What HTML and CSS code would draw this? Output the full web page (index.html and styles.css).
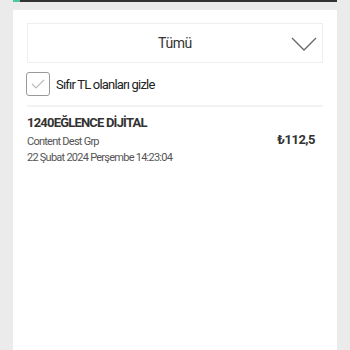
FILE: index.html
```html
<!DOCTYPE html>
<html>
<head>
<meta charset="utf-8">
<link rel="stylesheet" href="styles.css">
</head>
<body>
<div class="topbar"><span class="accent"></span></div>
<div class="card">
  <div class="select">
    <span class="select-text">Tümü</span>
    <svg class="chev" width="26" height="15" viewBox="0 0 26 15"><path d="M1 1 L13 13 L25 1" fill="none" stroke="#666" stroke-width="1.3"/></svg>
  </div>
  <label class="check">
    <span class="box"><svg width="14" height="10" viewBox="0 0 14 10"><path d="M1 5 L5 9 L13 1" fill="none" stroke="#bbb" stroke-width="1.2"/></svg></span>
    <span class="check-label">Sıfır TL olanları gizle</span>
  </label>
  <div class="sep"></div>
  <div class="item">
    <div class="item-left">
      <div class="title">1240EĞLENCE DİJİTAL</div>
      <div class="sub">Content Dest Grp</div>
      <div class="sub">22 Şubat 2024 Perşembe 14:23:04</div>
    </div>
    <div class="amount">₺112,5</div>
  </div>
</div>
</body>
</html>
```
FILE: styles.css
```css
html, body { margin: 0; padding: 0; }
body {
  background: #ebebeb;
  font-family: Roboto, sans-serif;
  width: 350px;
  height: 350px;
  overflow: hidden;
  padding: 0 13px;
  box-sizing: border-box;
  display: flex;
  flex-direction: column;
}
.topbar {
  height: 2px;
  background: #333;
  display: flex;
}
.accent { width: 7px; background: #4cc9a0; }
.card {
  margin-top: 8px;
  background: #fff;
  flex: 1;
  padding: 13px 14px 0 14px;
  box-sizing: border-box;
}
.select {
  height: 40px;
  border: 1px solid #eeeeee;
  box-sizing: border-box;
  display: flex;
  align-items: center;
  justify-content: center;
  position: relative;
}
.select-text { font-size: 14px; color: #333; letter-spacing: -0.4px; }
.chev { position: absolute; right: 5px; top: 13px; }
.check {
  display: flex;
  align-items: center;
  margin-top: 9px;
  margin-left: -1px;
}
.box {
  width: 22px;
  height: 22px;
  border: 1px solid #999;
  border-radius: 3px;
  display: flex;
  align-items: center;
  justify-content: center;
}
.check-label { font-size: 13px; color: #222; margin-left: 6px; letter-spacing: -0.8px; }
.sep { height: 2px; background: #f2f2f2; margin-top: 9px; }
.item {
  display: flex;
  justify-content: space-between;
  align-items: center;
  padding: 6px 8px 0 0;
}
.title { font-size: 13px; font-weight: 700; color: #333; line-height: 20px; margin-bottom: 1px; letter-spacing: -0.8px; }
.sub { font-size: 11px; color: #555; line-height: 16px; letter-spacing: -0.75px; }
.amount { font-size: 13px; font-weight: 700; color: #333; letter-spacing: -0.5px; }
```
